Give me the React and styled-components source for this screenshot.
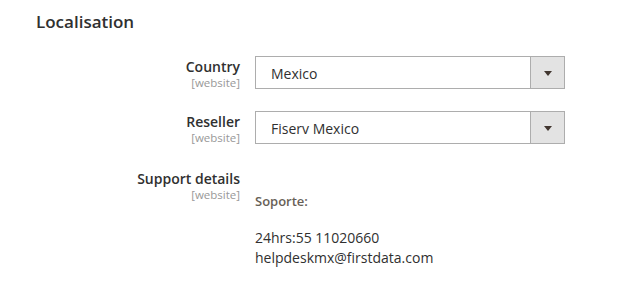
import styled, { createGlobalStyle } from "styled-components";

const GlobalStyle = createGlobalStyle`
  body {
    margin: 0;
    background: #fff;
    font-family: "Open Sans", "Liberation Sans", sans-serif;
    color: #303030;
  }
`;

const Page = styled.div`
  width: 624px;
  height: 307px;
  padding: 10px 0 0;
  box-sizing: border-box;
`;

const Title = styled.h2`
  margin: 0 0 22px 36px;
  font-size: 17px;
  font-weight: 600;
  line-height: 24px;
  color: #303030;
`;

const Fields = styled.div`
  display: grid;
  grid-template-columns: 240px 310px;
  column-gap: 15px;
  row-gap: 22px;
`;

const Label = styled.div`
  text-align: right;
  padding-top: ${(p) => p.$top || 0}px;
`;

const LabelText = styled.div`
  font-size: 14px;
  font-weight: 600;
  line-height: 16px;
  color: #303030;
`;

const Scope = styled.div`
  margin-top: 1px;
  font-size: 11.5px;
  line-height: 13px;
  color: #999;
`;

const Select = styled.div`
  display: flex;
  height: 33px;
  box-sizing: border-box;
  border: 1px solid #adadad;
  background: #fff;
`;

const SelectValue = styled.div`
  flex: 1;
  display: flex;
  align-items: center;
  padding: 1px 15px 0;
  font-size: 14px;
  color: #303030;
`;

const Toggle = styled.div`
  width: 33px;
  display: flex;
  align-items: center;
  justify-content: center;
  background: #e3e3e3;
  border-left: 1px solid #adadad;
`;

const Arrow = styled.span`
  width: 0;
  height: 0;
  border-left: 4px solid transparent;
  border-right: 4px solid transparent;
  border-top: 5px solid #41362f;
  margin-top: 1px;
`;

const Details = styled.div`
  padding-top: 25px;
  font-size: 14px;
  line-height: 20px;
  color: #303030;
`;

const Heading = styled.div`
  font-size: 13px;
  font-weight: 600;
  color: #676056;
  margin-bottom: 17px;
`;

function Dropdown({ value }) {
  return (
    <Select>
      <SelectValue>{value}</SelectValue>
      <Toggle>
        <Arrow />
      </Toggle>
    </Select>
  );
}

export default function App() {
  return (
    <Page>
      <GlobalStyle />
      <Title>Localisation</Title>
      <Fields>
        <Label $top={3}>
          <LabelText>Country</LabelText>
          <Scope>[website]</Scope>
        </Label>
        <Dropdown value="Mexico" />

        <Label $top={3}>
          <LabelText>Reseller</LabelText>
          <Scope>[website]</Scope>
        </Label>
        <Dropdown value="Fiserv Mexico" />

        <Label $top={5}>
          <LabelText>Support details</LabelText>
          <Scope>[website]</Scope>
        </Label>
        <Details>
          <Heading>Soporte:</Heading>
          <div>24hrs:55 11020660</div>
          <div>helpdeskmx@firstdata.com</div>
        </Details>
      </Fields>
    </Page>
  );
}
